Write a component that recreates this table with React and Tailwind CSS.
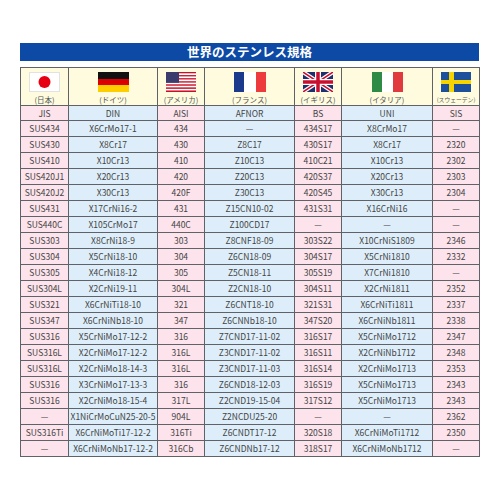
import React from 'react'

const font = { fontFamily: '"Noto Sans CJK JP", "Noto Sans", sans-serif' }

const pink = 'bg-[#fce3ec]'
const blue = 'bg-[#ddeefa]'
const colBg = [pink, blue, pink, blue, pink, blue, pink]

const rows = [
  ['SUS434', 'X6CrMo17-1', '434', '—', '434S17', 'X8CrMo17', '—'],
  ['SUS430', 'X8Cr17', '430', 'Z8C17', '430S17', 'X8Cr17', '2320'],
  ['SUS410', 'X10Cr13', '410', 'Z10C13', '410C21', 'X10Cr13', '2302'],
  ['SUS420J1', 'X20Cr13', '420', 'Z20C13', '420S37', 'X20Cr13', '2303'],
  ['SUS420J2', 'X30Cr13', '420F', 'Z30C13', '420S45', 'X30Cr13', '2304'],
  ['SUS431', 'X17CrNi16-2', '431', 'Z15CN10-02', '431S31', 'X16CrNi16', '—'],
  ['SUS440C', 'X105CrMo17', '440C', 'Z100CD17', '—', '—', '—'],
  ['SUS303', 'X8CrNi18-9', '303', 'Z8CNF18-09', '303S22', 'X10CrNiS1809', '2346'],
  ['SUS304', 'X5CrNi18-10', '304', 'Z6CN18-09', '304S17', 'X5CrNi1810', '2332'],
  ['SUS305', 'X4CrNi18-12', '305', 'Z5CN18-11', '305S19', 'X7CrNi1810', '—'],
  ['SUS304L', 'X2CrNi19-11', '304L', 'Z2CN18-10', '304S11', 'X2CrNi1811', '2352'],
  ['SUS321', 'X6CrNiTi18-10', '321', 'Z6CNT18-10', '321S31', 'X6CrNiTi1811', '2337'],
  ['SUS347', 'X6CrNiNb18-10', '347', 'Z6CNNb18-10', '347S20', 'X6CrNiNb1811', '2338'],
  ['SUS316', 'X5CrNiMo17-12-2', '316', 'Z7CND17-11-02', '316S17', 'X5CrNiMo1712', '2347'],
  ['SUS316L', 'X2CrNiMo17-12-2', '316L', 'Z3CND17-11-02', '316S11', 'X2CrNiNb1712', '2348'],
  ['SUS316L', 'X2CrNiMo18-14-3', '316L', 'Z3CND17-11-03', '316S14', 'X2CrNiMo1713', '2353'],
  ['SUS316', 'X3CrNiMo17-13-3', '316', 'Z6CND18-12-03', '316S19', 'X5CrNiMo1713', '2343'],
  ['SUS316', 'X2CrNiMo18-15-4', '317L', 'Z2CND19-15-04', '317S12', 'X5CrNiMo1713', '2343'],
  ['—', 'X1NiCrMoCuN25-20-5', '904L', 'Z2NCDU25-20', '—', '—', '2362'],
  ['SUS316Ti', 'X6CrNiMoTi17-12-2', '316Ti', 'Z6CNDT17-12', '320S18', 'X6CrNiMoTi1712', '2350'],
  ['—', 'X6CrNiMoNb17-12-2', '316Cb', 'Z6CNDNb17-12', '318S17', 'X6CrNiMoNb1712', '—'],
]

function Japan() {
  return (
    <svg width="31" height="20" viewBox="0 0 31 20">
      <rect x="0.5" y="0.5" width="30" height="19" fill="#fff" stroke="#e2e2e2" />
      <circle cx="15.5" cy="10" r="6" fill="#e60012" />
    </svg>
  )
}

function Germany() {
  return (
    <svg width="31" height="20" viewBox="0 0 31 20">
      <rect width="31" height="7" fill="#111" />
      <rect y="7" width="31" height="6" fill="#dd0000" />
      <rect y="13" width="31" height="7" fill="#ffce00" />
    </svg>
  )
}

function USA() {
  const stripes = []
  for (let i = 0; i < 13; i++) {
    stripes.push(
      <rect key={i} y={i * (20 / 13)} width="30" height={20 / 13} fill={i % 2 ? '#fff' : '#c8102e'} />
    )
  }
  return (
    <svg width="30" height="20" viewBox="0 0 30 20">
      {stripes}
      <rect width="13" height="10.8" fill="#3c3b6e" />
    </svg>
  )
}

function France() {
  return (
    <svg width="32" height="20" viewBox="0 0 32 20">
      <rect width="10" height="20" fill="#1b3a8c" />
      <rect x="10" width="12" height="20" fill="#fff" />
      <rect x="22" width="10" height="20" fill="#ec3a3d" />
    </svg>
  )
}

function UK() {
  return (
    <svg width="30" height="20" viewBox="0 0 60 40">
      <rect width="60" height="40" fill="#1d2f6f" />
      <path d="M0 0L60 40M60 0L0 40" stroke="#fff" strokeWidth="8" />
      <path d="M0 0L60 40M60 0L0 40" stroke="#c8102e" strokeWidth="3" />
      <path d="M30 0V40M0 20H60" stroke="#fff" strokeWidth="12" />
      <path d="M30 0V40M0 20H60" stroke="#c8102e" strokeWidth="7" />
    </svg>
  )
}

function Italy() {
  return (
    <svg width="31" height="20" viewBox="0 0 31 20">
      <rect width="10" height="20" fill="#2e8b45" />
      <rect x="10" width="11" height="20" fill="#fff" />
      <rect x="21" width="10" height="20" fill="#e03a3e" />
    </svg>
  )
}

function Sweden() {
  return (
    <svg width="30" height="20" viewBox="0 0 30 20">
      <rect width="30" height="20" fill="#1c4f9c" />
      <rect x="8" width="5" height="20" fill="#f5d400" />
      <rect y="8" width="30" height="4" fill="#f5d400" />
    </svg>
  )
}

const heads = [
  { flag: <Japan />, label: '(日本)', std: 'JIS', size: 'text-[7.5px]' },
  { flag: <Germany />, label: '(ドイツ)', std: 'DIN', size: 'text-[7.5px]' },
  { flag: <USA />, label: '(アメリカ)', std: 'AISI', size: 'text-[7.5px]' },
  { flag: <France />, label: '(フランス)', std: 'AFNOR', size: 'text-[7.5px]' },
  { flag: <UK />, label: '(イギリス)', std: 'BS', size: 'text-[7.5px]' },
  { flag: <Italy />, label: '(イタリア)', std: 'UNI', size: 'text-[7.5px]' },
  { flag: <Sweden />, label: '(スウェーデン)', std: 'SIS', size: 'text-[5.8px]' },
]

export default function App() {
  return (
    <div className="w-[500px] h-[500px] bg-white pt-[43px] pl-[20px]" style={font}>
      <div className="w-[459px] h-[18px] bg-[#0d4aa6] flex items-center justify-center text-white text-[12.5px] font-bold leading-none">
        世界のステンレス規格
      </div>
      <div className="mt-[6px] w-[460px] grid grid-cols-[47px_88px_46px_89px_46px_90px_46px] gap-px p-px bg-[#5f6266] text-[#444]">
        {heads.map((h) => (
          <div key={h.label} className="h-[37px] bg-[#fefbdf] flex flex-col items-center pt-[4px]">
            {h.flag}
            <span className={`${h.size} h-[8px] flex items-center leading-none mt-[4px] text-[#555] whitespace-nowrap`}>
              {h.label}
            </span>
          </div>
        ))}
        {heads.map((h, i) => (
          <div key={h.std} className={`h-[14px] ${colBg[i]} flex items-center justify-center text-[8.5px] leading-none`}>
            {h.std}
          </div>
        ))}
        {rows.map((r, ri) =>
          r.map((c, ci) => (
            <div
              key={ri + '-' + ci}
              className={`h-[15px] ${colBg[ci]} flex items-center justify-center text-[8.5px] leading-none whitespace-nowrap`}
            >
              {c}
            </div>
          ))
        )}
      </div>
    </div>
  )
}
